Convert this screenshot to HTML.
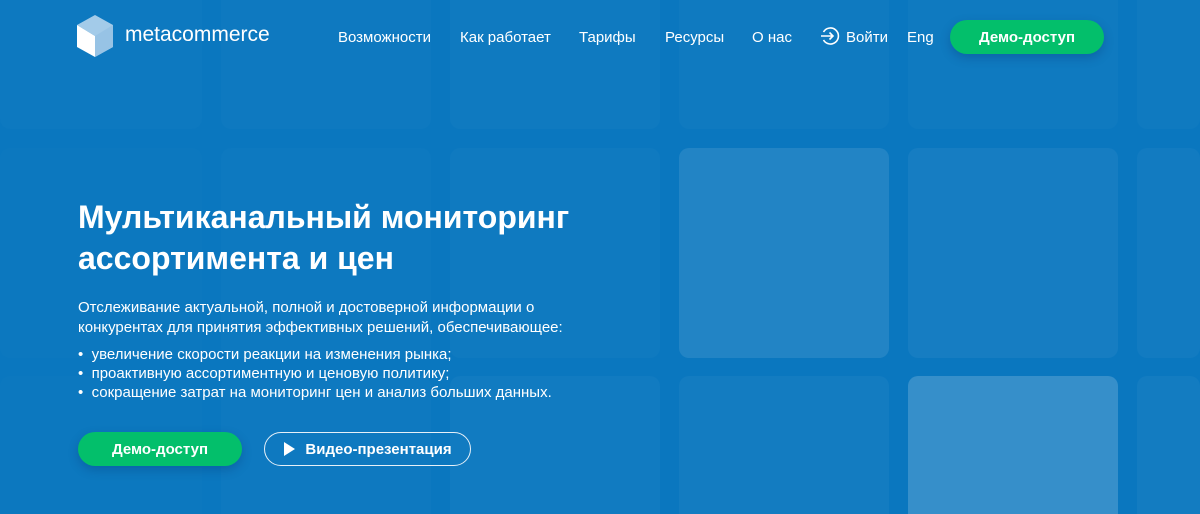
<!DOCTYPE html>
<html><head><meta charset="utf-8"><style>
*{margin:0;padding:0;box-sizing:border-box}
html,body{width:1200px;height:514px;overflow:hidden}
body{background:#0a77bf;font-family:"Liberation Sans",sans-serif;color:#fff;position:relative}
.sq{position:absolute;width:210px;height:210px;border-radius:10px;background:#fff}
.b{height:138px;border-radius:10px 10px 0 0}
.t{top:0!important;height:129px;border-radius:0 0 10px 10px}
.nav{position:absolute;top:29px;font-size:15px;white-space:nowrap}
.btn{position:absolute;border-radius:18px;font-weight:bold;font-size:15px;display:flex;align-items:center;justify-content:center}
</style></head><body>
<div class="sq t" style="left:0;width:202px;opacity:.015"></div>
<div class="sq t" style="left:221px;opacity:.02"></div>
<div class="sq t" style="left:450px;opacity:.025"></div>
<div class="sq t" style="left:679px;opacity:.025"></div>
<div class="sq t" style="left:908px;opacity:.025"></div>
<div class="sq t" style="left:1137px;width:63px;opacity:.025"></div>
<div class="sq" style="left:0;width:202px;top:148px;opacity:.01"></div>
<div class="sq" style="left:221px;top:148px;opacity:.015"></div>
<div class="sq" style="left:450px;top:148px;opacity:.025"></div>
<div class="sq" style="left:679px;top:148px;opacity:.1"></div>
<div class="sq" style="left:908px;top:148px;opacity:.05"></div>
<div class="sq" style="left:1137px;width:63px;top:148px;opacity:.035"></div>
<div class="sq b" style="left:0;width:202px;top:376px;opacity:.01"></div>
<div class="sq b" style="left:221px;top:376px;opacity:.02"></div>
<div class="sq b" style="left:450px;top:376px;opacity:.03"></div>
<div class="sq b" style="left:679px;top:376px;opacity:.04"></div>
<div class="sq b" style="left:908px;top:376px;opacity:.18"></div>
<div class="sq b" style="left:1137px;width:63px;top:376px;opacity:.04"></div>

<svg style="position:absolute;left:0;top:0" width="120" height="70">
<polygon points="95,15 113,25 113,47 95,57 95,36 77,25" fill="#a3cbe9"/>
<polygon points="77,25 95,36 95,57 77,47" fill="#fff"/>
<polygon points="95,36 113,25 113,47 95,57" fill="#97c3e5"/>
</svg>
<div style="position:absolute;left:125px;top:23px;font-size:21px">metacommerce</div>
<div class="nav" style="left:338px">Возможности</div>
<div class="nav" style="left:460px">Как работает</div>
<div class="nav" style="left:579px">Тарифы</div>
<div class="nav" style="left:665px">Ресурсы</div>
<div class="nav" style="left:752px">О нас</div>
<svg style="position:absolute;left:820px;top:26px" width="20" height="20" viewBox="0 0 20 20" fill="none" stroke="#fff" stroke-width="1.6"><path d="M3.5 6A8 8 0 1 1 3.5 14"/><path d="M1 10H13M9.5 6.5L13 10L9.5 13.5"/></svg>
<div class="nav" style="left:846px">Войти</div>
<div class="nav" style="left:907px">Eng</div>
<div class="btn" style="left:950px;top:20px;width:154px;height:34px;background:#03bf6b;box-shadow:0 4px 10px rgba(0,40,90,.25)">Демо-доступ</div>

<div style="position:absolute;left:78px;top:197px;font-size:32px;font-weight:bold;line-height:41px">Мультиканальный мониторинг<br>ассортимента и цен</div>
<div style="position:absolute;left:78px;top:298px;font-size:15px;line-height:20px">Отслеживание актуальной, полной и достоверной информации о<br>конкурентах для принятия эффективных решений, обеспечивающее:</div>
<div style="position:absolute;left:78px;top:345px;font-size:15px;line-height:19px">
<div>•&nbsp;&nbsp;увеличение скорости реакции на изменения рынка;</div>
<div>•&nbsp;&nbsp;проактивную ассортиментную и ценовую политику;</div>
<div>•&nbsp;&nbsp;сокращение затрат на мониторинг цен и анализ больших данных.</div>
</div>
<div class="btn" style="left:78px;top:432px;width:164px;height:34px;background:#03bf6b;box-shadow:0 4px 10px rgba(0,40,90,.25)">Демо-доступ</div>
<div class="btn" style="left:264px;top:432px;width:207px;height:34px;border:1.5px solid #e6f0f8"><svg width="12" height="14" style="margin-right:10px"><polygon points="1,0 12,7 1,14" fill="#fff"/></svg>Видео-презентация</div>
</body></html>
